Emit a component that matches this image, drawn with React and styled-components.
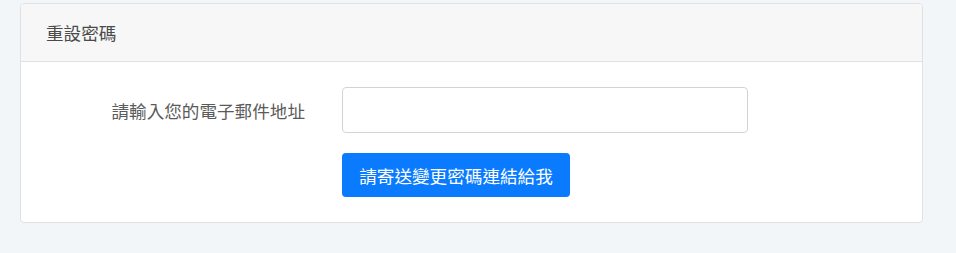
import React from "react";
import styled, { createGlobalStyle } from "styled-components";

const Global = createGlobalStyle`
  html, body { margin: 0; padding: 0; background: #f3f6f9; }
  body { font-family: "Noto Sans CJK TC", "Noto Sans", sans-serif; }
`;

const Page = styled.div`
  padding: 3px 0 0 20px;
  min-height: 250px;
  box-sizing: border-box;
`;

const Card = styled.div`
  width: 903px;
  box-sizing: border-box;
  background: #fff;
  border: 1px solid #e1e1e1;
  border-radius: 4px;
  overflow: hidden;
`;

const CardHeader = styled.div`
  height: 58px;
  box-sizing: border-box;
  background: #f7f7f7;
  border-bottom: 1px solid #e1e1e1;
  display: flex;
  align-items: center;
  padding-left: 25px;
  font-size: 17.6px;
  color: #4a4a4a;
`;

const CardBody = styled.div`
  padding: 25px 0 25px 0;
  display: grid;
  grid-template-columns: 284px 406px;
  column-gap: 37px;
  row-gap: 20px;
  align-items: center;
`;

const Label = styled.label`
  text-align: right;
  font-size: 17.6px;
  color: #5a5a5a;
`;

const Input = styled.input`
  height: 46px;
  box-sizing: border-box;
  border: 1px solid #d0d4da;
  border-radius: 4px;
  padding: 0 12px;
  font-size: 16px;
  outline: none;
`;

const Button = styled.button`
  grid-column: 2;
  justify-self: start;
  height: 44px;
  width: 228px;
  box-sizing: border-box;
  background: #0a7bfe;
  color: #fff;
  border: none;
  border-radius: 4px;
  font-family: inherit;
  font-size: 17.6px;
  padding: 0;
`;

export default function App() {
  return (
    <>
      <Global />
      <Page>
        <Card>
          <CardHeader>重設密碼</CardHeader>
          <CardBody>
            <Label>請輸入您的電子郵件地址</Label>
            <Input type="email" />
            <Button>請寄送變更密碼連結給我</Button>
          </CardBody>
        </Card>
      </Page>
    </>
  );
}
